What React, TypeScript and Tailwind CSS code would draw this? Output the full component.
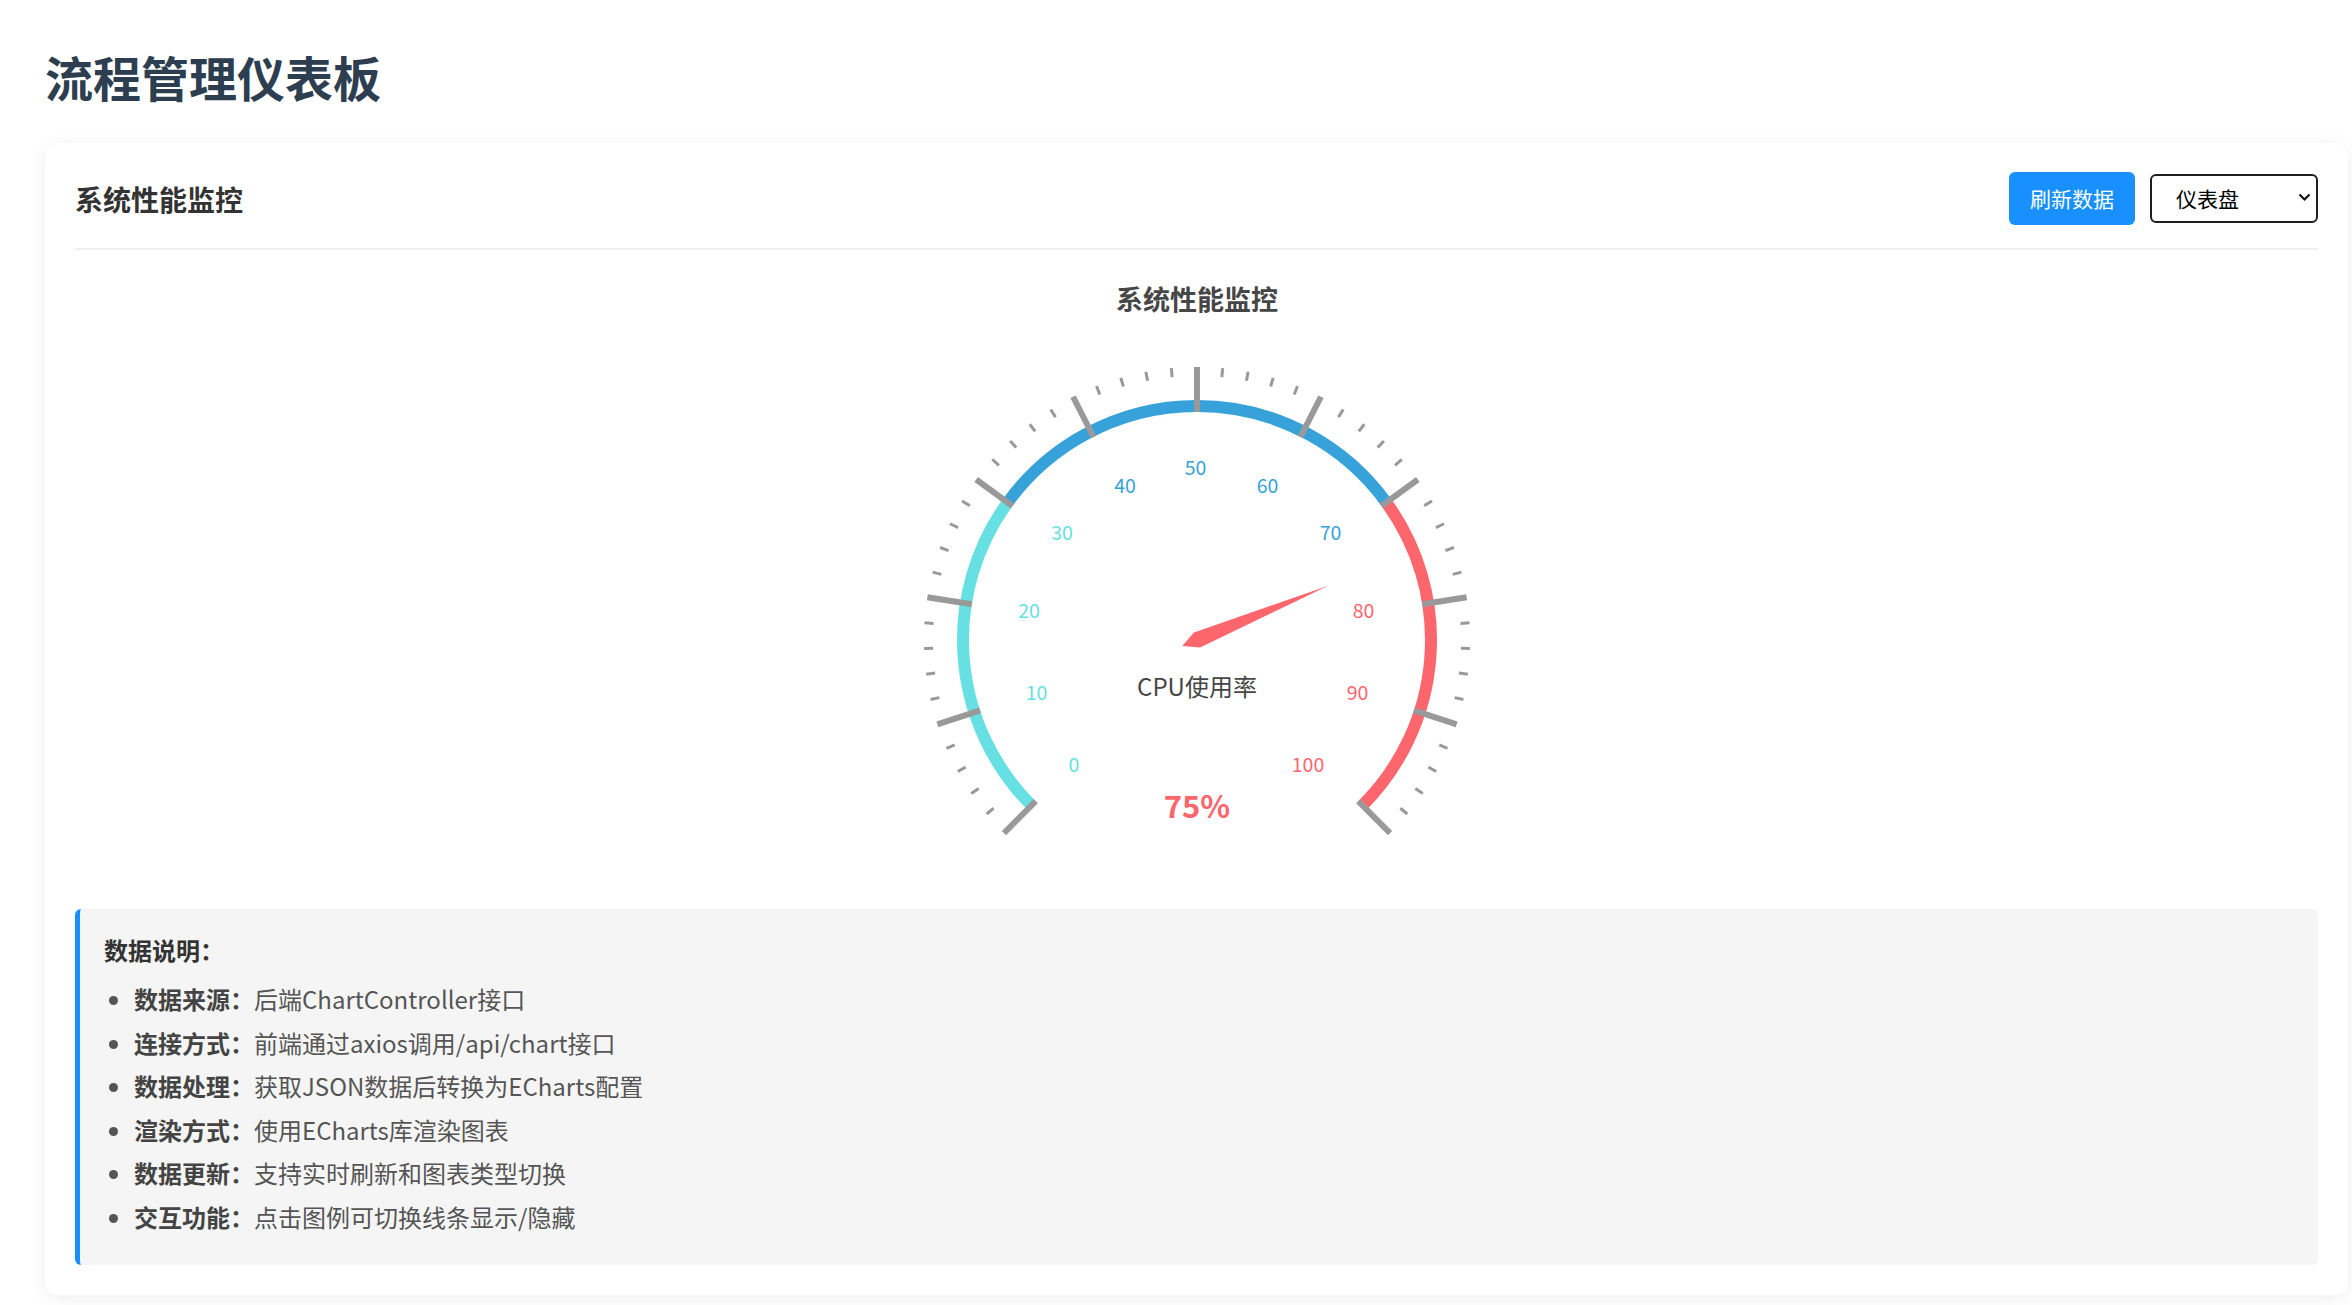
import React from "react";

const CX = 1122;
const CY = 390;

const CYAN = "#67e0e3";
const BLUE = "#37a2da";
const RED = "#fd666d";

const angleOf = (v: number) => 225 - 2.7 * v;

function pt(r: number, deg: number): [number, number] {
  const rad = (deg * Math.PI) / 180;
  return [CX + r * Math.cos(rad), CY - r * Math.sin(rad)];
}

function arc(r: number, a1: number, a2: number) {
  const [x1, y1] = pt(r, a1);
  const [x2, y2] = pt(r, a2);
  const large = a1 - a2 > 180 ? 1 : 0;
  return `M${x1} ${y1} A${r} ${r} 0 ${large} 1 ${x2} ${y2}`;
}

const colorOf = (v: number) => (v <= 30 ? CYAN : v <= 70 ? BLUE : RED);

// label centres relative to the gauge centre
const labels: [number, number, number][] = [
  [0, -123, 123.5],
  [10, -160.5, 51.5],
  [20, -168, -31],
  [30, -135, -109],
  [40, -72, -155.5],
  [50, -1.5, -173.5],
  [60, 70.5, -155.5],
  [70, 133.5, -109],
  [80, 166.5, -31],
  [90, 160.5, 51.5],
  [100, 111, 123.5],
];

function Gauge({ value }: { value: number }) {
  const ticks: number[] = [];
  for (let v = 0; v <= 100; v += 2) ticks.push(v);

  // needle (echarts style kite)
  const th = (angleOf(value) * Math.PI) / 180;
  const dx = Math.cos(th);
  const dy = -Math.sin(th);
  const w = 8;
  const len = 142;
  const needle = [
    [CX - dx * w * 2, CY - dy * w * 2],
    [CX + Math.sin(th) * w, CY + Math.cos(th) * w],
    [CX + dx * len, CY + dy * len],
    [CX - Math.sin(th) * w, CY - Math.cos(th) * w],
  ]
    .map((p) => p.join(","))
    .join(" ");

  return (
    <svg width="2243" height="630" viewBox="0 0 2243 630" className="block">
      <text
        x={CX}
        y={48}
        textAnchor="middle"
        dominantBaseline="central"
        fontSize="27"
        fontWeight="700"
        fill="#464646"
      >
        系统性能监控
      </text>

      {/* axis line */}
      <path d={arc(234, angleOf(0), angleOf(30))} stroke={CYAN} strokeWidth="12" fill="none" />
      <path d={arc(234, angleOf(30), angleOf(70))} stroke={BLUE} strokeWidth="12" fill="none" />
      <path d={arc(234, angleOf(70), angleOf(100))} stroke={RED} strokeWidth="12" fill="none" />

      {/* ticks */}
      {ticks.map((v) => {
        const major = v % 10 === 0;
        const [x1, y1] = pt(major ? 228 : 264, angleOf(v));
        const [x2, y2] = pt(273, angleOf(v));
        return (
          <line
            key={v}
            x1={x1}
            y1={y1}
            x2={x2}
            y2={y2}
            stroke="#999999"
            strokeWidth={major ? 6 : 3}
          />
        );
      })}

      {/* labels */}
      {labels.map(([v, ox, oy]) => (
        <text
          key={v}
          x={CX + ox}
          y={CY + oy}
          textAnchor="middle"
          dominantBaseline="central"
          fontSize="19.5"
          fill={colorOf(v)}
        >
          {v}
        </text>
      ))}

      <polygon points={needle} fill={colorOf(value)} />

      <text
        x={CX}
        y={CY + 45}
        textAnchor="middle"
        dominantBaseline="central"
        fontSize="24"
        fill="#464646"
      >
        CPU使用率
      </text>
      <text
        x={CX}
        y={CY + 164}
        textAnchor="middle"
        dominantBaseline="central"
        fontSize="31"
        fontWeight="700"
        fill={RED}
      >
        {value}%
      </text>
    </svg>
  );
}

const notes = [
  { label: "数据来源：", text: "后端ChartController接口" },
  { label: "连接方式：", text: "前端通过axios调用/api/chart接口" },
  { label: "数据处理：", text: "获取JSON数据后转换为ECharts配置" },
  { label: "渲染方式：", text: "使用ECharts库渲染图表" },
  { label: "数据更新：", text: "支持实时刷新和图表类型切换" },
  { label: "交互功能：", text: "点击图例可切换线条显示/隐藏" },
];

export default function App() {
  return (
    <div className="min-h-screen bg-white pl-[45px] pt-[47px] pb-[10px] font-['Noto_Sans_CJK_SC',sans-serif]">
      <h1 className="text-[48px] leading-[58px] font-bold text-[#2c3e50]">流程管理仪表板</h1>

      <div className="mt-[38px] w-[2303px] rounded-[12px] bg-white px-[30px] pt-[29px] pb-[30px] shadow-[0_3px_18px_rgba(0,0,0,0.07)]">
        {/* header */}
        <div className="flex items-center justify-between border-b-2 border-[#f0f0f0] pb-[23px]">
          <h2 className="text-[28px] font-bold text-[#333]">系统性能监控</h2>
          <div className="flex items-center gap-[15px]">
            <button className="h-[53px] rounded-[6px] bg-[#1890ff] px-[21px] text-[21px] text-white">
              刷新数据
            </button>
            <div className="relative">
              <select className="h-[49px] w-[168px] appearance-none rounded-[6px] border-2 border-[#1f1f1f] bg-white pl-[24px] text-[21px] text-black">
                <option>仪表盘</option>
                <option>折线图</option>
                <option>柱状图</option>
              </select>
              <svg
                className="pointer-events-none absolute right-[7px] top-[19px]"
                width="13"
                height="9"
                viewBox="0 0 13 9"
              >
                <path d="M1.5 1.5 L6.5 6.5 L11.5 1.5" stroke="#111" strokeWidth="2.2" fill="none" />
              </svg>
            </div>
          </div>
        </div>

        {/* chart */}
        <Gauge value={75} />

        {/* notes */}
        <div className="mt-[29px] rounded-[6px] border-l-[5px] border-[#1890ff] bg-[#f5f5f5] pl-[24px] pt-[22px] pb-[27px]">
          <h4 className="mb-[8px] text-[24px] leading-[38px] font-bold text-[#333]">数据说明：</h4>
          <ul className="list-disc pl-[30px] text-[24px] leading-[43.5px] text-[#555]">
            {notes.map((n) => (
              <li key={n.label}>
                <strong className="font-bold text-[#444]">{n.label}</strong>
                {n.text}
              </li>
            ))}
          </ul>
        </div>
      </div>
    </div>
  );
}
